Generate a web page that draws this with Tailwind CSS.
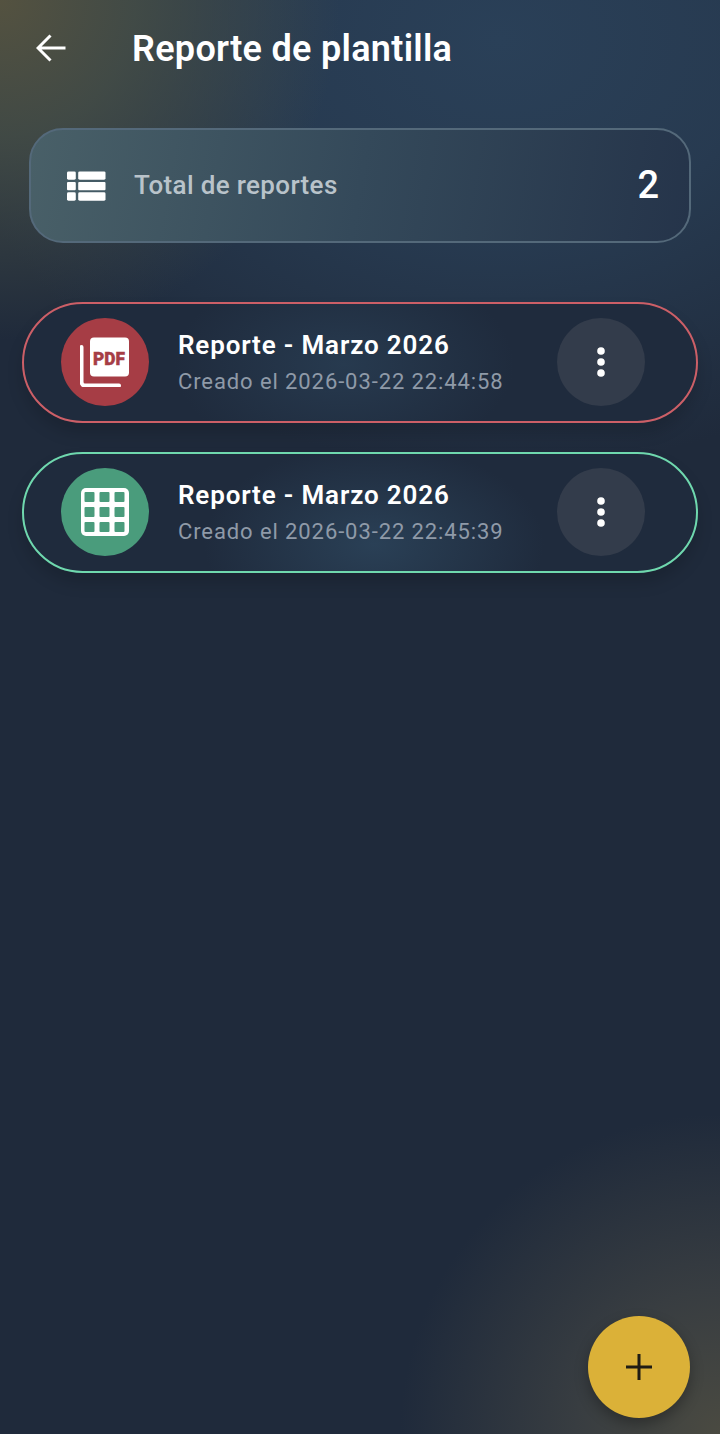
<!DOCTYPE html>
<html lang="en">

<head>
  <meta charset="UTF-8" />
  <meta name="viewport" content="width=device-width, initial-scale=1" />
  <script src="https://cdn.jsdelivr.net/npm/@tailwindcss/browser@4"></script>
  <title>Reporte de plantilla</title>
</head>

<body class="font-['Roboto',sans-serif] text-white">
  <div class="relative h-[1434px] w-[720px] overflow-hidden bg-[#1f2a3b]">
    <!-- background glows -->
    <div class="absolute inset-0 bg-[radial-gradient(ellipse_560px_430px_at_500px_40px,#2a4058_0%,rgba(42,64,88,0.75)_45%,rgba(31,42,59,0)_100%)]"></div>
    <div class="absolute inset-0 bg-[radial-gradient(circle_340px_at_0px_0px,#545240_0%,rgba(70,78,70,0.85)_40%,rgba(50,70,85,0)_100%)]"></div>
    <div class="absolute inset-0 bg-[radial-gradient(circle_320px_at_720px_1434px,#4a4a41_0%,#383d41_45%,rgba(31,42,59,0)_100%)]"></div>

    <div class="relative flex h-full flex-col">
      <header class="flex h-[96px] items-center pl-[36px]">
        <button class="w-[96px]">
          <svg class="h-[30px] w-[30px]" viewBox="0 0 30 30" fill="none" stroke="white" stroke-width="3">
            <path d="M29.5 15H2.5M14.5 2.5 2 15l12.5 12.5" />
          </svg>
        </button>
        <h1 class="pt-[2px] text-[36px] font-semibold leading-none tracking-[0.3px]">Reporte de plantilla</h1>
      </header>

      <section class="mx-[29px] mt-[32px] flex h-[115px] items-center rounded-[34px] border-2 border-[#54697a] bg-[linear-gradient(100deg,#496068_0%,#34495a_50%,#25344a_100%)] pl-[36px] pr-[30px]">
        <svg class="h-[30px] w-[39px]" viewBox="0 0 40 30" fill="white">
          <rect x="0" y="0" width="9" height="8.5" rx="1.5" />
          <rect x="0" y="10.8" width="9" height="8.5" rx="1" />
          <rect x="0" y="21.5" width="9" height="8.5" rx="1.5" />
          <rect x="11.5" y="0" width="28" height="8.5" rx="1.5" />
          <rect x="11.5" y="10.8" width="28" height="8.5" rx="1" />
          <rect x="11.5" y="21.5" width="28" height="8.5" rx="1.5" />
        </svg>
        <span class="ml-[28px] text-[26px] font-medium tracking-[0.35px] text-[#b9c3ca]">Total de reportes</span>
        <span class="ml-auto text-[38px] font-medium">2</span>
      </section>

      <ul class="mt-[59px] flex flex-col gap-[29px] px-[22px]">
        <li class="flex h-[121px] items-center rounded-full border-2 border-[#cc5f67] bg-[radial-gradient(ellipse_170px_100px_at_320px_60px,#273a4f_0%,#1f2b3d_100%)] pb-[1px] pl-[37px] pr-[51px] shadow-[0_10px_16px_rgba(0,0,0,0.15)]">
          <div class="flex h-[88px] w-[88px] shrink-0 items-center justify-center rounded-full bg-[#a63d45]">
            <svg class="h-[50px] w-[50px]" viewBox="0 0 50 50">
              <rect x="10" y="0.5" width="39" height="39" rx="4" fill="white" />
              <path d="M1.5 10v35a3.5 3.5 0 0 0 3.5 3.5h34" fill="none" stroke="white" stroke-width="4" stroke-linecap="round" />
              <text x="13" y="27.5" fill="#a63d45" stroke="#a63d45" stroke-width="0.4" font-family="Roboto, sans-serif" font-size="18" font-weight="900" textLength="32" lengthAdjust="spacingAndGlyphs">PDF</text>
            </svg>
          </div>
          <div class="ml-[29px] min-w-0 pt-[3px]">
            <p class="text-[26px] font-semibold leading-[30px] tracking-[0.85px]">Reporte - Marzo 2026</p>
            <p class="mt-[7px] text-[22px] leading-[30px] tracking-[0.9px] text-[#8f9aa8]">Creado el 2026-03-22 22:44:58</p>
          </div>
          <button class="ml-auto flex h-[88px] w-[88px] shrink-0 items-center justify-center rounded-full bg-[#333c4b]">
            <svg class="h-[30px] w-[8px]" viewBox="0 0 8 30" fill="white">
              <circle cx="4" cy="4" r="3.8" />
              <circle cx="4" cy="15" r="3.8" />
              <circle cx="4" cy="26" r="3.8" />
            </svg>
          </button>
        </li>
        <li class="flex h-[121px] items-center rounded-full border-2 border-[#6fd8ae] bg-[radial-gradient(ellipse_170px_100px_at_350px_90px,#2a4056_0%,#1f2b3d_100%)] pb-[1px] pl-[37px] pr-[51px] shadow-[0_10px_16px_rgba(0,0,0,0.15)]">
          <div class="flex h-[88px] w-[88px] shrink-0 items-center justify-center rounded-full bg-[#4a9c7c]">
            <svg class="h-[50px] w-[50px]" viewBox="0 0 50 50">
              <rect x="1" y="1" width="48" height="48" rx="5" fill="white" />
              <g fill="#4a9c7c">
                <rect x="4.5" y="5" width="10" height="10" rx="1" />
                <rect x="19.5" y="5" width="10" height="10" rx="1" />
                <rect x="34.5" y="5" width="10" height="10" rx="1" />
                <rect x="4.5" y="20" width="10" height="10" rx="1" />
                <rect x="19.5" y="20" width="10" height="10" rx="1" />
                <rect x="34.5" y="20" width="10" height="10" rx="1" />
                <rect x="4.5" y="35" width="10" height="10" rx="1" />
                <rect x="19.5" y="35" width="10" height="10" rx="1" />
                <rect x="34.5" y="35" width="10" height="10" rx="1" />
              </g>
            </svg>
          </div>
          <div class="ml-[29px] min-w-0 pt-[3px]">
            <p class="text-[26px] font-semibold leading-[30px] tracking-[0.85px]">Reporte - Marzo 2026</p>
            <p class="mt-[7px] text-[22px] leading-[30px] tracking-[0.9px] text-[#8f9aa8]">Creado el 2026-03-22 22:45:39</p>
          </div>
          <button class="ml-auto flex h-[88px] w-[88px] shrink-0 items-center justify-center rounded-full bg-[#333c4b]">
            <svg class="h-[30px] w-[8px]" viewBox="0 0 8 30" fill="white">
              <circle cx="4" cy="4" r="3.8" />
              <circle cx="4" cy="15" r="3.8" />
              <circle cx="4" cy="26" r="3.8" />
            </svg>
          </button>
        </li>
      </ul>
    </div>

    <!-- floating add button -->
    <button class="absolute bottom-[16px] right-[30px] flex h-[102px] w-[102px] items-center justify-center rounded-full bg-[#dbb138] shadow-[0_6px_14px_rgba(0,0,0,0.3)]">
      <svg class="h-[26px] w-[26px]" viewBox="0 0 26 26" fill="none" stroke="#1f1c14" stroke-width="3">
        <path d="M13 0v26M0 13h26" />
      </svg>
    </button>
  </div>
</body>

</html>
